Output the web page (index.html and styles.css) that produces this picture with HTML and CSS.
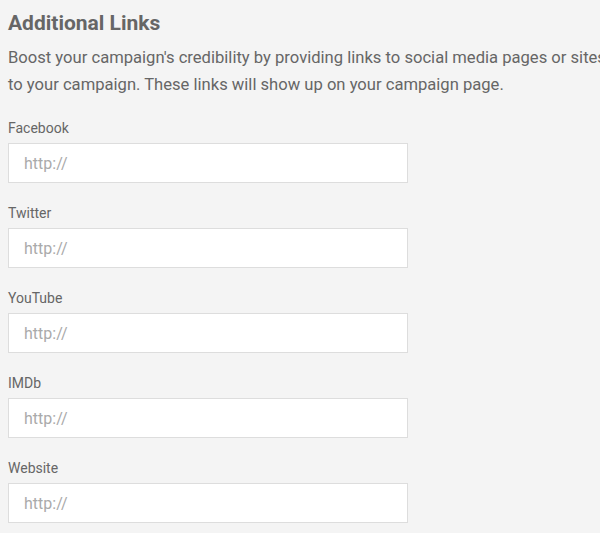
FILE: index.html
```html
<!DOCTYPE html>
<html lang="en">
<head>
    <meta charset="UTF-8">
    <meta name="viewport" content="width=device-width, initial-scale=1.0">
    <title>Additional Links</title>
    <link rel="stylesheet" href="styles.css">
</head>
<body>
    <div class="links-section">
        <h2>Additional Links</h2>
        <p class="intro">Boost your campaign's credibility by providing links to social media pages or sites related to your campaign. These links will show up on your campaign page.</p>

        <div class="field">
            <label for="facebook">Facebook</label>
            <input type="text" id="facebook" placeholder="http://">
        </div>
        <div class="field">
            <label for="twitter">Twitter</label>
            <input type="text" id="twitter" placeholder="http://">
        </div>
        <div class="field">
            <label for="youtube">YouTube</label>
            <input type="text" id="youtube" placeholder="http://">
        </div>
        <div class="field">
            <label for="imdb">IMDb</label>
            <input type="text" id="imdb" placeholder="http://">
        </div>
        <div class="field">
            <label for="website">Website</label>
            <input type="text" id="website" placeholder="http://">
        </div>
    </div>
</body>
</html>
```

FILE: styles.css
```css
html, body {
    margin: 0;
    padding: 0;
    overflow: hidden;
}
body {
    background: #f4f4f4;
    font-family: Roboto, Arial, sans-serif;
    color: #666;
}
.links-section {
    width: 655px;
    padding: 0 8px;
}
h2 {
    font-size: 21px;
    font-weight: bold;
    line-height: 26px;
    margin: 10px 0 8px;
}
.intro {
    font-size: 16.6px;
    line-height: 27px;
    margin: 0 0 20px;
}
.field {
    margin-bottom: 20px;
}
.field label {
    display: block;
    font-size: 14px;
    line-height: 20px;
    margin-bottom: 5px;
}
.field input {
    display: block;
    width: 400px;
    height: 40px;
    box-sizing: border-box;
    padding: 0 15px;
    border: 1px solid #ddd;
    background: #fff;
    font-family: Roboto, Arial, sans-serif;
    font-size: 16px;
    color: #555;
    outline: none;
}
.field input::placeholder {
    color: #aaa;
}
```
